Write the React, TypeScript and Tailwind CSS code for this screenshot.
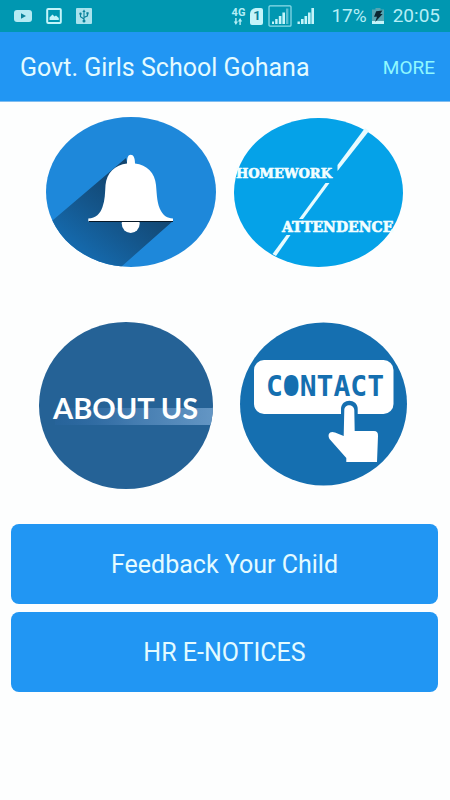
import React from "react";

function YoutubeIcon() {
  return (
    <svg className="h-4 w-[18px]" viewBox="0 0 18 16" aria-hidden="true">
      <rect x="0" y="2" width="18" height="12" rx="3" fill="#b5eaf3" />
      <path d="M7 5.2v5.6L12 8z" fill="#0b8199" />
    </svg>
  );
}

function PictureIcon() {
  return (
    <svg className="h-4 w-4" viewBox="0 0 16 16" aria-hidden="true">
      <rect x="1.2" y="1" width="13.6" height="14" rx="1" fill="none" stroke="#c4f4fa" strokeWidth="2" />
      <path d="M3.5 12V9.5L6.5 6.5L8.5 8.5L10 7.5L12.8 10V12z" fill="#c4f4fa" />
    </svg>
  );
}

function UsbIcon() {
  return (
    <svg className="h-4 w-4" viewBox="0 0 16 16" aria-hidden="true">
      <rect x="0" y="0" width="16" height="16" rx="1" fill="#a9e2ed" />
      <g stroke="#08819b" strokeWidth="1.1" fill="none">
        <path d="M8 3v10M8 11L4.5 8.8V6M8 9.5L11.5 7.8V5.5" />
      </g>
      <path d="M8 1.5L6.4 4h3.2z" fill="#08819b" />
      <circle cx="8" cy="13" r="1.5" fill="#08819b" />
      <circle cx="4.5" cy="5.8" r="1.2" fill="#08819b" />
      <rect x="10.4" y="4.2" width="2.2" height="2.2" fill="#08819b" />
    </svg>
  );
}

function DataIcon() {
  return (
    <span className="flex flex-col items-center text-[#b5eef6]">
      <span className="text-[11px] leading-[10px] font-bold">4G</span>
      <svg className="h-[7px] w-[10px]" viewBox="0 0 10 7" aria-hidden="true">
        <path d="M2.2 0h1.4v3.6H5L2.9 7 .8 3.6h1.4zM6.4 7h1.4V3.4h1.4L7.1 0 5 3.4h1.4z" fill="currentColor" />
      </svg>
    </span>
  );
}

function SimIcon() {
  return (
    <span className="flex h-[17px] w-[13px] items-center justify-center rounded-xs rounded-tl-md bg-[#c4f4fa] text-[13px] leading-4 font-bold text-[#0b8199]">
      1
    </span>
  );
}

function BoxedSignalIcon() {
  return (
    <svg className="h-[22px] w-6" viewBox="0 0 24 22" aria-hidden="true">
      <rect x="1" y="0.8" width="22" height="20.4" rx="1" fill="none" stroke="#8fdde9" strokeWidth="1.2" />
      <g fill="#c4f4fa">
        <rect x="4" y="16.5" width="2" height="2.5" />
        <rect x="7.2" y="14" width="2.4" height="5" />
        <rect x="10.8" y="11" width="2.6" height="8" />
        <rect x="14.4" y="7.5" width="2.6" height="11.5" />
      </g>
      <rect x="18" y="3.5" width="2.4" height="15.5" fill="#5dbfd1" />
    </svg>
  );
}

function SignalIcon() {
  return (
    <svg className="h-[18px] w-[18px]" viewBox="0 0 18 18" aria-hidden="true">
      <g fill="#c4f4fa">
        <rect x="0.5" y="14.5" width="2.4" height="2.5" />
        <rect x="4" y="12" width="2.6" height="5" />
        <rect x="7.5" y="9" width="2.6" height="8" />
        <rect x="11" y="5.5" width="2.6" height="11.5" />
        <rect x="14.4" y="1" width="2.6" height="16" />
      </g>
    </svg>
  );
}

function BatteryIcon() {
  return (
    <svg className="h-4 w-3" viewBox="0 0 12 16" aria-hidden="true">
      <path d="M0 1.5h3.5V0h5v1.5H12V16H0z" fill="#55a5b2" />
      <rect x="0" y="13" width="12" height="3" fill="#c4f4fa" />
      <path d="M4.2 3.2L10.4 2.6L8.2 6H10.6L3.2 14L5 8.8H2z" fill="#0c2530" />
    </svg>
  );
}

function StatusBar() {
  return (
    <div className="flex h-8 items-center justify-between bg-[#0097b1] pr-[10px] pl-[14px]">
      <div className="flex items-center gap-[14px]">
        <YoutubeIcon />
        <PictureIcon />
        <UsbIcon />
      </div>
      <div className="flex items-center">
        <div className="mr-4 flex items-center gap-[5px]">
          <DataIcon />
          <SimIcon />
          <BoxedSignalIcon />
          <SignalIcon />
        </div>
        <div className="flex items-center gap-[5px] text-[19px] leading-8 text-[#b5eef6]">
          <span>17%</span>
          <BatteryIcon />
          <span className="ml-1">20:05</span>
        </div>
      </div>
    </div>
  );
}

function BellTile() {
  return (
    <svg className="h-[150px] w-[170px]" viewBox="0 0 170 150" aria-hidden="true">
      <defs>
        <clipPath id="bell-disc">
          <ellipse cx="85" cy="75" rx="85" ry="75" />
        </clipPath>
        <linearGradient id="bell-shade" gradientUnits="userSpaceOnUse" x1="90" y1="70" x2="40" y2="135">
          <stop offset="0" stopColor="#12446e" />
          <stop offset="0.5" stopColor="#14558a" />
          <stop offset="1" stopColor="#1568aa" />
        </linearGradient>
      </defs>
      <ellipse cx="85" cy="75" rx="85" ry="75" fill="#1e88da" />
      <path d="M80 41L0 109V150H75L127 104L90 90z" fill="url(#bell-shade)" clipPath="url(#bell-disc)" />
      <ellipse cx="84.7" cy="106.5" rx="9" ry="9.5" fill="#fff" />
      <path
        d="M81 46.5C81 41 82 37.7 84.7 37.7C87.5 37.7 89 41 89 46.5C101 48 109 56 110 68C111 79 111 87 115 94C118 99 121 101 127 101.5V104.3H42.3V101.5C50 101 54 97 56.5 90C59 83 59 76 59.5 68C60.5 56 69 48 81 46.5z"
        fill="#fff"
      />
      <path d="M43 104.5H127" stroke="#071827" strokeWidth="1.2" />
    </svg>
  );
}

function HomeworkTile() {
  return (
    <svg className="h-[150px] w-[170px]" viewBox="0 0 170 150" aria-hidden="true">
      <ellipse cx="84.5" cy="75.5" rx="84.5" ry="74.5" fill="#05a2e8" />
      <g fill="#e8fbff">
        <path d="M131 11L135 14L103.5 54V48z" />
        <path d="M91.5 66H95.5L69 102H65z" />
        <path d="M52.5 118H56.5L42 139L38.5 137z" />
      </g>
      <g
        fill="#f2feff"
        stroke="#f2feff"
        strokeWidth="0.6"
        fontFamily="'DejaVu Serif', serif"
        fontWeight="700"
      >
        <text x="2" y="61" fontSize="13">HOMEWORK</text>
        <text x="48" y="115" fontSize="14">ATTENDENCE</text>
      </g>
    </svg>
  );
}

function AboutTile() {
  return (
    <svg className="h-[167px] w-[174px]" viewBox="0 0 174 167" aria-hidden="true">
      <defs>
        <clipPath id="about-disc">
          <ellipse cx="87" cy="83.5" rx="87" ry="83.5" />
        </clipPath>
        <linearGradient id="about-band" x1="0" x2="1" y1="0" y2="0">
          <stop offset="0" stopColor="#2b67a3" stopOpacity="0.3" />
          <stop offset="0.5" stopColor="#447cb0" />
          <stop offset="1" stopColor="#6496c4" />
        </linearGradient>
      </defs>
      <ellipse cx="87" cy="83.5" rx="87" ry="83.5" fill="#256296" />
      <rect x="16" y="86" width="158" height="17" fill="url(#about-band)" clipPath="url(#about-disc)" />
      <text x="14" y="97" fontSize="29" fontWeight="700" fontFamily="Lato, sans-serif" fill="#fff">
        ABOUT US
      </text>
    </svg>
  );
}

function ContactTile() {
  return (
    <svg className="h-[164px] w-[168px]" viewBox="0 0 168 164" aria-hidden="true">
      <ellipse cx="83.5" cy="82" rx="83.5" ry="81.5" fill="#156fb0" />
      <rect x="14" y="38" width="139.5" height="54" rx="10" fill="#fff" />
      <text
        x="85"
        y="74"
        fontSize="28"
        fontWeight="700"
        textAnchor="middle"
        fontFamily="'DejaVu Sans Mono', monospace"
        fill="#156fb0"
      >
        CONTACT
      </text>
      <ellipse cx="51" cy="64" rx="5" ry="9" fill="#156fb0" />
      <path d="M101 95V87C101 76 117.7 76 117.7 87V95z" fill="#156fb0" />
      <path
        d="M104.3 88C104.3 81.5 114 81.5 114.3 88L114.7 109H134Q138.3 109 138 114L137 140H106.3V136L89.5 117C87 112 90 108.5 95 110.5L103.7 114z"
        fill="#fff"
      />
    </svg>
  );
}

function Tile({ label, children }: { label: string; children: React.ReactNode }) {
  return (
    <button type="button" aria-label={label} className="block cursor-pointer">
      {children}
    </button>
  );
}

function WideButton({ children }: { children: React.ReactNode }) {
  return (
    <button
      type="button"
      className="h-20 w-full cursor-pointer rounded-lg bg-[#2196f3] pt-0.5 text-[25px] leading-8 text-[#e4fbff]"
    >
      {children}
    </button>
  );
}

export default function App() {
  return (
    <div className="min-h-screen bg-[#fdfefe] font-[Roboto,sans-serif]">
      <StatusBar />
      <header className="flex h-[70px] items-center justify-between border-b border-[#7fbdf0] bg-[#2196f3] pt-0.5 pr-[15px] pl-5">
        <h1 className="text-[25px] leading-8 text-[#e4fbff]">Govt. Girls School Gohana</h1>
        <button type="button" className="cursor-pointer text-[19px] leading-8 text-[#8ff8ff]">
          MORE
        </button>
      </header>
      <main>
        <div className="flex justify-center gap-[18px] pt-[15px]">
          <Tile label="Notifications">
            <BellTile />
          </Tile>
          <Tile label="Homework and attendence">
            <HomeworkTile />
          </Tile>
        </div>
        <div className="flex items-start justify-center gap-[27px] pt-[55px] pr-[3px]">
          <Tile label="About us">
            <AboutTile />
          </Tile>
          <Tile label="Contact">
            <ContactTile />
          </Tile>
        </div>
        <div className="flex flex-col gap-2 pt-[35px] pr-3 pl-[11px]">
          <WideButton>Feedback Your Child</WideButton>
          <WideButton>HR E-NOTICES</WideButton>
        </div>
      </main>
    </div>
  );
}
